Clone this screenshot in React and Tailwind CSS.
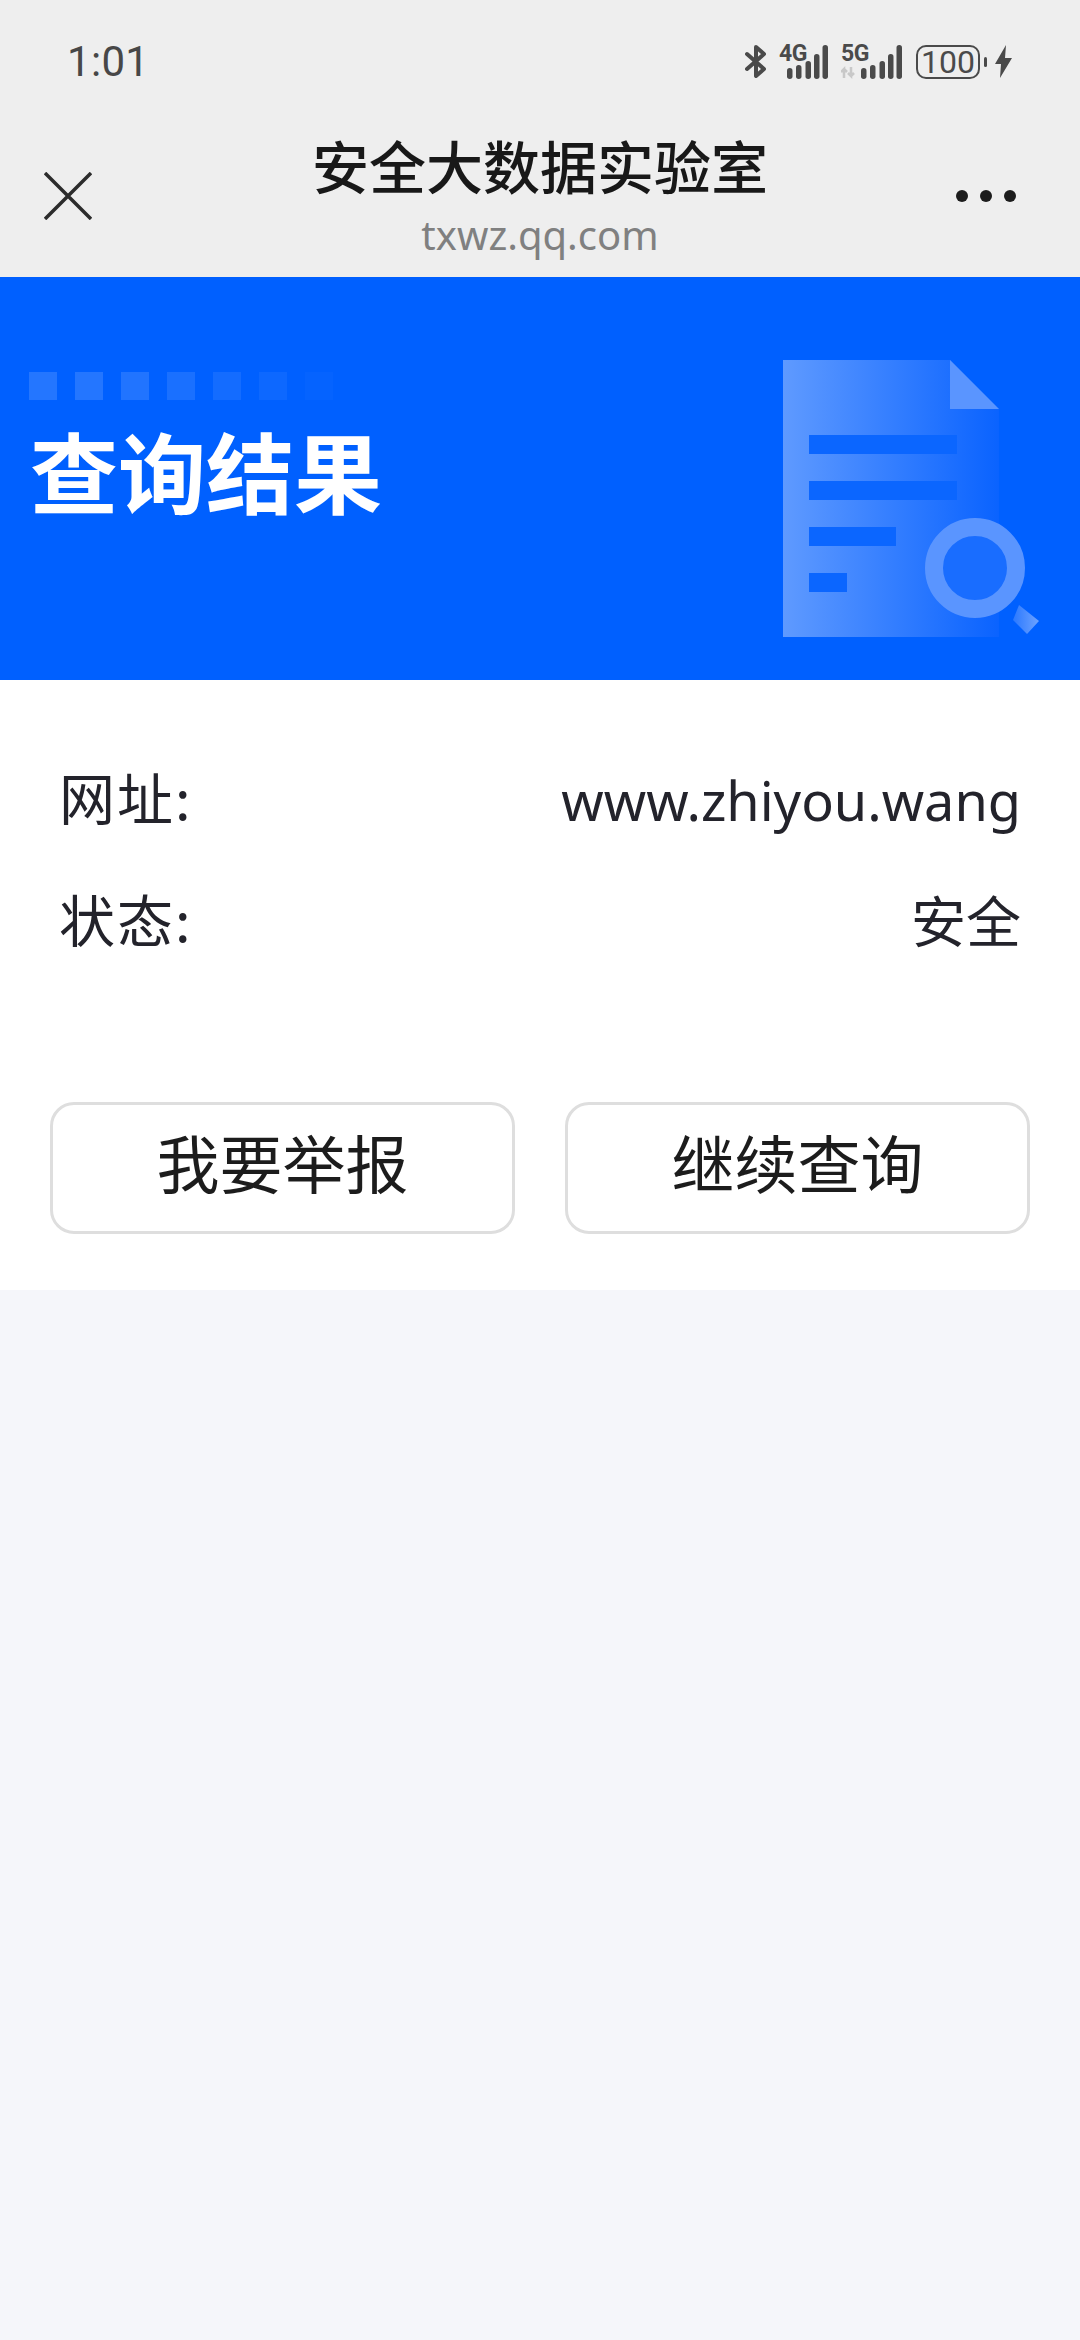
import React from 'react';

const CJK = 'font-["Noto_Sans_CJK_SC",sans-serif]';

const Signal = ({ label, arrows }) => (
  <div className="relative h-[34px]">
    <span className="absolute top-[-1px] left-0 font-['Roboto',sans-serif] text-[23px] leading-[20px] font-bold tracking-[-0.5px] text-[#4a4a4a]">{label}</span>
    <svg width={arrows ? 61 : 49} height="34" viewBox={arrows ? '-12 0 61 34' : '0 0 49 34'} className="block">
      {arrows && <path d="M-9 33V24l-3 3M-9 24l3 3M-2 22v9l-3-3M-2 31l3-3" stroke="#c8c8c8" strokeWidth="2.5" fill="none" />}
      <g fill="#4a4a4a">
        <rect x="8" y="23" width="5.5" height="11" rx="2.7" />
        <rect x="17" y="20" width="5.5" height="14" rx="2.7" />
        <rect x="26.5" y="16" width="5.5" height="18" rx="2.7" />
        <rect x="35" y="9" width="5.5" height="25" rx="2.7" />
        <rect x="43.5" y="0" width="5.5" height="34" rx="2.7" />
      </g>
    </svg>
  </div>
);

const StatusBar = () => (
  <div className="flex h-[123px] items-center justify-between pr-[68px] pl-[67px]">
    <span className="font-['Roboto',sans-serif] text-[42px] leading-none tracking-[0.3px] text-[#474747]">1:01</span>
    <div className="flex items-center">
      <svg width="21" height="33" viewBox="0 0 21 33" className="mr-[13px]">
        <path d="M2 9l17 15-8 7V2l8 7L2 24" fill="none" stroke="#4a4a4a" strokeWidth="4" strokeLinejoin="round" strokeLinecap="round" />
      </svg>
      <div className="mr-[13px] w-[49px]"><Signal label="4G" /></div>
      <div className="mr-[14px] w-[61px]"><Signal label="5G" arrows /></div>
      <div className="flex h-[34px] w-[64px] items-center justify-center rounded-[10px] border-[2.5px] border-[#4a4a4a] font-['Roboto',sans-serif] text-[32px] leading-none text-[#4a4a4a]">100</div>
      <div className="ml-[4px] h-[10px] w-[3px] rounded-full bg-[#4a4a4a]" />
      <svg width="17" height="33" viewBox="0 0 17 33" className="ml-[8px]">
        <path d="M11 0L0 19h6L5 33 17 13h-7z" fill="#4a4a4a" />
      </svg>
    </div>
  </div>
);

const NavBar = () => (
  <div className="flex h-[154px] items-start justify-between pr-[64px] pl-[44px]">
    <div className="w-[100px]">
      <svg width="48" height="48" viewBox="0 0 48 48" className="mt-[49px]">
        <path d="M1 1l46 46M47 1L1 47" stroke="#2c2c2c" strokeWidth="3.5" fill="none" />
      </svg>
    </div>
    <div className="flex flex-col items-center pt-[9px]">
      <span className={`${CJK} text-[57px] leading-[64px] font-medium text-[#181818]`}>安全大数据实验室</span>
      <span className="mt-[16px] font-['Noto_Sans',sans-serif] text-[40px] leading-[46px] text-[#808080]">txwz.qq.com</span>
    </div>
    <div className="mt-[67px] flex w-[80px] justify-end gap-[12px]">
      <span className="h-[12px] w-[12px] rounded-full bg-[#1c1c1c]" />
      <span className="h-[12px] w-[12px] rounded-full bg-[#1c1c1c]" />
      <span className="h-[12px] w-[12px] rounded-full bg-[#1c1c1c]" />
    </div>
  </div>
);

const DocIcon = () => (
  <svg width="256" height="278" viewBox="43 30 256 278" className="block">
    <defs>
      <linearGradient id="sheet" x1="0" y1="0" x2="1" y2="0">
        <stop offset="0" stopColor="#5f9aff" />
        <stop offset="1" stopColor="#0a63ff" />
      </linearGradient>
      <linearGradient id="handle" x1="0" y1="0" x2="1" y2="0">
        <stop offset="0" stopColor="#2a78ff" />
        <stop offset="1" stopColor="#6ea3ff" />
      </linearGradient>
    </defs>
    <path d="M43 30h167l49 49v228H43z" fill="url(#sheet)" />
    <path d="M210 30l49 49h-49z" fill="#5a95ff" />
    <g fill="#0b66ff">
      <rect x="69" y="105" width="148" height="19" />
      <rect x="69" y="151" width="148" height="19" />
      <rect x="69" y="197" width="87" height="19" />
      <rect x="69" y="243" width="38" height="19" />
    </g>
    <circle cx="235" cy="238" r="41" fill="#196dff" stroke="#5a95ff" strokeWidth="18" />
    <path d="M279 275l20 16-12 13-14-14z" fill="url(#handle)" />
  </svg>
);

const Banner = () => (
  <div className="flex h-[403px] justify-between bg-[#0060ff] pt-[83px] pr-[41px] pl-[29px]">
    <div className="pt-[12px]">
      <div className="flex gap-[18px]">
        {[0.14, 0.14, 0.13, 0.1, 0.08, 0.05, 0.02].map((o, i) => (
          <span key={i} className="h-[28px] w-[28px] bg-white" style={{ opacity: o }} />
        ))}
      </div>
      <h1 className={`${CJK} mt-[13px] ml-[1px] text-[88px] leading-[112px] font-bold text-white`}>查询结果</h1>
    </div>
    <DocIcon />
  </div>
);

const Row = ({ label, value, latin }) => (
  <div className="flex h-[122px] items-center justify-between text-[#23232b]">
    <span className={`${CJK} mb-[10px] text-[56px] leading-none tracking-[2px]`}>{label}</span>
    <span className={latin ? "mb-[2px] font-['Noto_Sans',sans-serif] text-[54px] leading-none" : `${CJK} mb-[10px] text-[55px] leading-none`}>{value}</span>
  </div>
);

const Button = ({ children }) => (
  <button className={`${CJK} flex h-[132px] w-[465px] items-center justify-center rounded-[24px] border-[3px] border-[#dedede] bg-white pb-[16px] text-[63px] leading-none text-[#1c1c1c]`}>
    {children}
  </button>
);

export default function App() {
  return (
    <div className="flex min-h-[2340px] flex-col bg-[#f5f6fa]">
      <div className="bg-[#eeeeee]">
        <StatusBar />
        <NavBar />
      </div>
      <Banner />
      <div className="flex h-[610px] flex-col bg-white">
        <div className="flex flex-col px-[59px] pt-[60px]">
          <Row label="网址:" value="www.zhiyou.wang" latin />
          <Row label="状态:" value="安全" />
        </div>
        <div className="mt-[118px] flex justify-between px-[50px]">
          <Button>我要举报</Button>
          <Button>继续查询</Button>
        </div>
      </div>
    </div>
  );
}
